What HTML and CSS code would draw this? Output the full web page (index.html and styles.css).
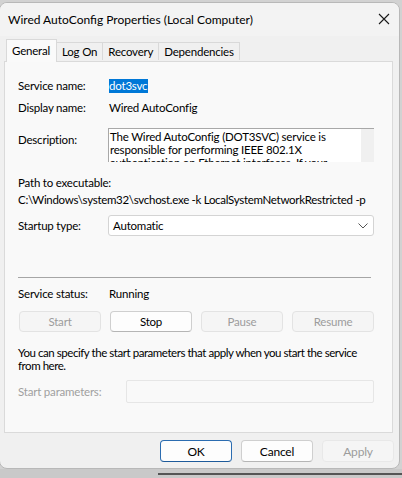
FILE: index.html
```html
<!DOCTYPE html>
<html>
<head>
<meta charset="utf-8">
<link rel="stylesheet" href="styles.css">
</head>
<body>
<div class="screen">
  <div class="window">
    <div class="titlebar">
      <span class="title">Wired AutoConfig Properties (Local Computer)</span>
      <svg class="close" width="12" height="12" viewBox="0 0 12 12"><path d="M1 1 L11 11 M11 1 L1 11" stroke="#1a1a1a" stroke-width="1.1" fill="none"/></svg>
    </div>
    <div class="tabs">
      <div class="tab active">General</div>
      <div class="tab">Log On</div>
      <div class="tab">Recovery</div>
      <div class="tab">Dependencies</div>
    </div>
    <div class="panel">
      <div class="row r-svc">
        <span class="label">Service name:</span>
        <span class="value"><span class="sel">dot3svc</span></span>
      </div>
      <div class="row r-disp">
        <span class="label">Display name:</span>
        <span class="value">Wired AutoConfig</span>
      </div>
      <div class="row r-desc">
        <span class="label desc-label">Description:</span>
        <div class="descbox">
          <div class="desctext">The Wired AutoConfig (DOT3SVC) service is responsible for performing IEEE 802.1X authentication on Ethernet interfaces. If your current</div>
          <div class="scroll"></div>
        </div>
      </div>
      <div class="row r-path">Path to executable:</div>
      <div class="row r-pathval">C:\Windows\system32\svchost.exe -k LocalSystemNetworkRestricted -p</div>
      <div class="row r-start">
        <span class="label">Startup type:</span>
        <div class="select">
          <span>Automatic</span>
          <svg width="10" height="6" viewBox="0 0 10 6"><path d="M0.5 0.5 L5 5 L9.5 0.5" stroke="#555" stroke-width="1" fill="none"/></svg>
        </div>
      </div>
      <div class="sep"></div>
      <div class="row r-status">
        <span class="label">Service status:</span>
        <span class="value">Running</span>
      </div>
      <div class="btnrow">
        <div class="btn disabled">Start</div>
        <div class="btn">Stop</div>
        <div class="btn disabled">Pause</div>
        <div class="btn disabled">Resume</div>
      </div>
      <div class="hint">You can specify the start parameters that apply when you start the service<br>from here.</div>
      <div class="row r-params">
        <span class="label grey">Start parameters:</span>
        <div class="paraminput"></div>
      </div>
    </div>
    <div class="footer">
      <div class="fbtn ok">OK</div>
      <div class="fbtn">Cancel</div>
      <div class="fbtn disabled">Apply</div>
    </div>
  </div>
  <div class="desk"><div class="deskbar"></div></div>
</div>
</body>
</html>
```
FILE: styles.css
```css
* { box-sizing: border-box; }
html, body { margin: 0; padding: 0; }
body {
  font-family: Lato, "Liberation Sans", Arial, sans-serif;
  font-size: 11.5px;
  letter-spacing: -0.2px;
  color: #000;
  background: #cfcfcf;
}
.screen {
  width: 402px;
  height: 478px;
  overflow: hidden;
  background: #d2d2d2;
  display: flex;
  flex-direction: column;
  padding-top: 2px;
}
.window {
  width: 401px;
  height: 467px;
  margin-left: -1px;
  flex: none;
  background: #f0f0f0;
  border: 1px solid #b8b8b8;
  border-radius: 8px;
  display: flex;
  flex-direction: column;
  overflow: hidden;
}
.titlebar {
  height: 33px;
  flex: none;
  background: #f3f3f3;
  display: flex;
  align-items: center;
  justify-content: space-between;
  padding: 0 9px 0 8px;
}
.title { font-size: 12px; letter-spacing: 0; color: #000; margin-top: -1px; }
.close { margin-top: -1px; }
.tabs {
  height: 25px;
  flex: none;
  display: flex;
  align-items: flex-end;
  padding-left: 6px;
  position: relative;
  z-index: 1;
}
.tab {
  height: 18px;
  padding: 0 5px;
  border: 1px solid #d9d9d9;
  border-bottom: none;
  border-left: none;
  background: #f0f0f0;
  display: flex;
  align-items: center;
  margin-bottom: 1px;
}
.tab.active {
  height: 23px;
  background: #fafafa;
  border-left: 1px solid #d9d9d9;
  padding: 0 6px 2px 5px;
  margin-bottom: -1px;
}
.panel {
  margin: 0 6px 0 4px;
  height: 372px;
  flex: none;
  background: #f9f9f9;
  border: 1px solid #dadada;
  padding: 0 0 0 13px;
  display: flex;
  flex-direction: column;
}
.row { display: flex; align-items: center; height: 16px; flex: none; }
.label { width: 91px; flex: none; }
.grey { color: #a0a0a0; width: 108px; }
.value { white-space: nowrap; }
.sel { background: #0078d7; color: #fff; padding: 0 1px 1px 0; }
.r-svc { margin-top: 15px; }
.r-disp { margin-top: 6px; }
.r-desc { margin-top: 13px; height: 34px; align-items: flex-start; }
.desc-label { margin-top: 5px; }
.descbox {
  width: 266px;
  height: 34px;
  margin-left: -1px;
  background: #fff;
  border-top: 1px solid #a8a8a8;
  border-left: 1px solid #a8a8a8;
  display: flex;
  overflow: hidden;
}
.desctext {
  width: 253px;
  padding: 1px 0 0 1px;
  line-height: 13px;
  overflow: hidden;
}
.scroll { width: 13px; background: #f0f0f0; flex: none; }
.r-path { margin-top: 12px; }
.r-pathval { margin-top: 1px; white-space: nowrap; letter-spacing: -0.3px; }
.r-start { margin-top: 8px; height: 21px; }
.select {
  width: 266px;
  height: 21px;
  margin-left: -1px;
  background: #fff;
  border: 1px solid #d4d4d4;
  border-radius: 3px;
  display: flex;
  align-items: center;
  justify-content: space-between;
  padding: 0 5px 0 4px;
}
.sep {
  margin-top: 41px;
  width: 353px;
  height: 1px;
  background: #a6a6a6;
  flex: none;
}
.r-status { margin-top: 7px; }
.btnrow {
  margin-top: 10px;
  display: flex;
  gap: 9px;
  flex: none;
  padding-left: 1px;
}
.btn {
  width: 82px;
  height: 21px;
  border: 1px solid #cfcfcf;
  border-bottom-color: #b5b5b5;
  border-radius: 4px;
  background: #fdfdfd;
  display: flex;
  align-items: center;
  justify-content: center;
}
.btn.disabled {
  background: #f5f5f5;
  border-color: #e3e3e3;
  color: #9c9c9c;
}
.hint {
  margin-top: 14px;
  white-space: nowrap;
  letter-spacing: -0.45px;
  line-height: 13px;
  flex: none;
}
.r-params { margin-top: 8px; height: 23px; }
.paraminput {
  width: 248px;
  height: 23px;
  border: 1px solid #e6e6e6;
  background: #f9f9f9;
  border-radius: 2px;
}
.footer {
  flex: 1;
  display: flex;
  justify-content: flex-end;
  gap: 9px;
  padding: 7px 5px 0 0;
}
.fbtn {
  width: 72px;
  height: 22px;
  border: 1px solid #cfcfcf;
  border-bottom-color: #b5b5b5;
  border-radius: 4px;
  background: #fdfdfd;
  display: flex;
  align-items: center;
  justify-content: center;
  font-size: 12px;
}
.fbtn.ok { border: 1px solid #2b6cb0; border-bottom-color: #1d5a9a; }
.fbtn.disabled { background: #f5f5f5; border-color: #e8e8e8; color: #9c9c9c; }
.desk {
  flex: 1;
  background: #c9c9c9;
  position: relative;
}
.deskbar {
  margin: 4px 0 0 158px;
  height: 2px;
  background: #555;
}
```
